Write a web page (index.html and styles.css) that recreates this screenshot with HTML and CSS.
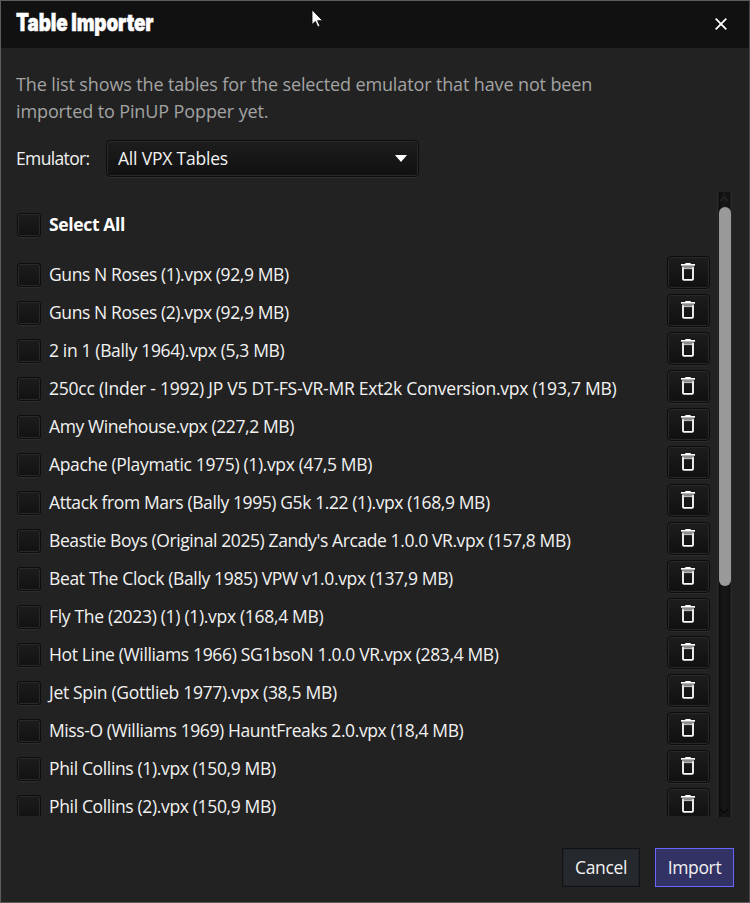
FILE: index.html
```html
<!DOCTYPE html>
<html lang="en">
<head>
<meta charset="utf-8">
<title>Table Importer</title>
<link rel="stylesheet" href="styles.css">
</head>
<body>
<svg width="0" height="0" class="defs"><symbol id="trash" viewBox="0 0 14 18"><path d="M4.3 0h5.4v1H14v1.7H0V1h4.3z" fill="#fff"/><path d="M1 2.7h12v2.5H1z" fill="#8b8b8b"/><path d="M2 4.2V16q0 .9.9.9h8.2q.9 0 .9-.9V4.2" fill="none" stroke="#fff" stroke-width="1.8"/><path d="M2.5 5.6h9" stroke="#ddd" stroke-width=".9"/></symbol></svg>
<main class="dialog">
<header class="titlebar"><h1>Table Importer</h1>
<svg class="close" width="12" height="12" viewBox="0 0 12 12"><path d="M.7.7l10.6 10.6M11.3.7L.7 11.3" stroke="#fff" stroke-width="1.8"/></svg></header>
<p class="intro"><span class="intro-a">The list shows the tables for the selected emulator that have not been</span><br><span class="intro-b">imported to PinUP Popper yet.</span></p>
<div class="emulator"><label>Emulator:</label><div class="combo"><span>All VPX Tables</span><svg width="12" height="7" viewBox="0 0 12 7"><path d="M0 0h12L6 7z" fill="#fff"/></svg></div></div>
<section class="scroll">
<div class="list">
<div class="all"><i class="check"></i><b>Select All</b></div>
<div class="row snug"><i class="check"></i><span>Guns N Roses (1).vpx (92,9 MB)</span><button><svg><use href="#trash"/></svg></button></div>
<div class="row snug"><i class="check"></i><span>Guns N Roses (2).vpx (92,9 MB)</span><button><svg><use href="#trash"/></svg></button></div>
<div class="row"><i class="check"></i><span>2 in 1 (Bally 1964).vpx (5,3 MB)</span><button><svg><use href="#trash"/></svg></button></div>
<div class="row wide"><i class="check"></i><span>250cc (Inder - 1992) JP V5 DT-FS-VR-MR Ext2k Conversion.vpx (193,7 MB)</span><button><svg><use href="#trash"/></svg></button></div>
<div class="row snug"><i class="check"></i><span>Amy Winehouse.vpx (227,2 MB)</span><button><svg><use href="#trash"/></svg></button></div>
<div class="row"><i class="check"></i><span>Apache (Playmatic 1975) (1).vpx (47,5 MB)</span><button><svg><use href="#trash"/></svg></button></div>
<div class="row snug"><i class="check"></i><span>Attack from Mars (Bally 1995) G5k 1.22 (1).vpx (168,9 MB)</span><button><svg><use href="#trash"/></svg></button></div>
<div class="row snug"><i class="check"></i><span>Beastie Boys (Original 2025) Zandy's Arcade 1.0.0 VR.vpx (157,8 MB)</span><button><svg><use href="#trash"/></svg></button></div>
<div class="row"><i class="check"></i><span>Beat The Clock (Bally 1985) VPW v1.0.vpx (137,9 MB)</span><button><svg><use href="#trash"/></svg></button></div>
<div class="row loose"><i class="check"></i><span>Fly The (2023) (1) (1).vpx (168,4 MB)</span><button><svg><use href="#trash"/></svg></button></div>
<div class="row"><i class="check"></i><span>Hot Line (Williams 1966) SG1bsoN 1.0.0 VR.vpx (283,4 MB)</span><button><svg><use href="#trash"/></svg></button></div>
<div class="row loose"><i class="check"></i><span>Jet Spin (Gottlieb 1977).vpx (38,5 MB)</span><button><svg><use href="#trash"/></svg></button></div>
<div class="row snug"><i class="check"></i><span>Miss-O (Williams 1969) HauntFreaks 2.0.vpx (18,4 MB)</span><button><svg><use href="#trash"/></svg></button></div>
<div class="row"><i class="check"></i><span>Phil Collins (1).vpx (150,9 MB)</span><button><svg><use href="#trash"/></svg></button></div>
<div class="row"><i class="check"></i><span>Phil Collins (2).vpx (150,9 MB)</span><button><svg><use href="#trash"/></svg></button></div>
</div>
<div class="bar"><svg width="14" height="15"><path d="M3 9l4-4 4 4" fill="none" stroke="#262626" stroke-width="1.4"/></svg><div class="thumb"></div><svg class="down" width="14" height="15"><path d="M3 7l4 4 4-4" fill="none" stroke="#080808" stroke-width="1.4"/></svg></div>
</section>
<footer><div class="btn cancel">Cancel</div><div class="btn import">Import</div></footer>
</main>
<svg class="cursor" width="13" height="20" viewBox="0 0 13 20"><path d="M1 .8v14.7l3.4-3.1 2.4 5.6 2.2-1-2.4-5.3h5z" fill="#fff" stroke="#000" stroke-width=".8"/></svg>
</body>
</html>
```
FILE: styles.css
```css
* { box-sizing: border-box; }
body { margin: 0; background: #222; color: #f2f2f2; font: 17.5px/22px "Open Sans", "Noto Sans", sans-serif; letter-spacing: -.35px; white-space: nowrap; }
.defs { position: absolute; }
svg { display: block; flex: none; }
.dialog { width: 750px; height: 903px; border: 1px solid #5c5c5c; border-right-color: #484848; display: flex; flex-direction: column; overflow: hidden; }
.titlebar { flex: none; height: 47px; background: #111; display: flex; justify-content: space-between; padding: 0 22px 0 15px; }
h1 { margin: 7px 0 0; font: 900 24px/30px Inter, sans-serif; letter-spacing: -.1px; color: #fff; -webkit-text-stroke: .5px #fff; transform: scaleX(.785); transform-origin: left; }
.close { margin-top: 17px; }
.intro { flex: none; margin: 23px 0 0 15px; font-size: 18px; line-height: 27px; color: #a3a3a3; }
.intro-a { letter-spacing: -.13px; }
.intro-b { letter-spacing: -.11px; }
.emulator { flex: none; margin: 15px 0 0 15px; height: 37px; display: flex; align-items: center; }
.emulator label { width: 90px; padding-bottom: 2px; letter-spacing: -.65px; }
.combo { width: 313px; height: 37px; display: flex; align-items: center; justify-content: space-between; padding: 0 11px; border: 1px solid #0d0d0d; border-radius: 4px; background: linear-gradient(#1d1d1d, #101010); box-shadow: inset 0 0 0 1px #292929, 0 1px 0 #303030; letter-spacing: -.2px; }
.combo span { padding-bottom: 2px; }
.scroll { flex: none; margin: 15px 0 0 15px; height: 625px; display: flex; justify-content: space-between; width: 717px; }
.list { width: 695px; height: 624px; overflow: hidden; padding: 21px 0 0 1px; }
.all { height: 42px; display: flex; align-items: flex-start; }
.all b { margin-left: 8px; color: #fff; }
.row { height: 38px; display: flex; align-items: flex-start; }
.row span { margin-left: 8px; }
.snug span { letter-spacing: -.4px; }
.loose span { letter-spacing: -.31px; }
.wide span { letter-spacing: -.24px; }
.check { width: 24px; height: 24px; flex: none; border: 1px solid #0d0d0d; border-radius: 3px; background: linear-gradient(#1c1c1c, #121212); box-shadow: inset 0 0 0 1px #292929, 0 1px 0 #2d2d2d; }
.row .check, .row span { margin-top: 8px; }
.row button { margin: 1px 1px 0 auto; width: 43px; height: 33px; padding: 0 0 1px; display: flex; align-items: center; justify-content: center; border: 1px solid #0d0d0d; border-radius: 4px; background: linear-gradient(#1d1d1d, #101010); box-shadow: inset 0 0 0 1px #292929, 0 1px 0 #2d2d2d; }
.row button svg { width: 14px; height: 18px; margin-right: 1px; }
.bar { width: 15px; background: linear-gradient(90deg, #2a2a2a 1px, #0d0d0d 2px, #171717 7px, #111 13px, #292929 14px); display: flex; flex-direction: column; margin-right: 1px; }
.thumb { width: 12px; height: 379px; margin-left: 2px; border-radius: 6px; background: #999; }
.down { margin-top: auto; }
footer { flex: none; margin: 31px 15px 0 0; display: flex; justify-content: flex-end; gap: 15px; }
.btn { height: 39px; line-height: 37px; text-align: center; border: 1px solid #101215; }
.cancel { width: 78px; background: #25282c; box-shadow: inset 0 0 0 1px #202428; }
.import { width: 79px; background: #333264; border-color: #6866ff; }
.cursor { position: absolute; left: 311px; top: 9px; }
```
